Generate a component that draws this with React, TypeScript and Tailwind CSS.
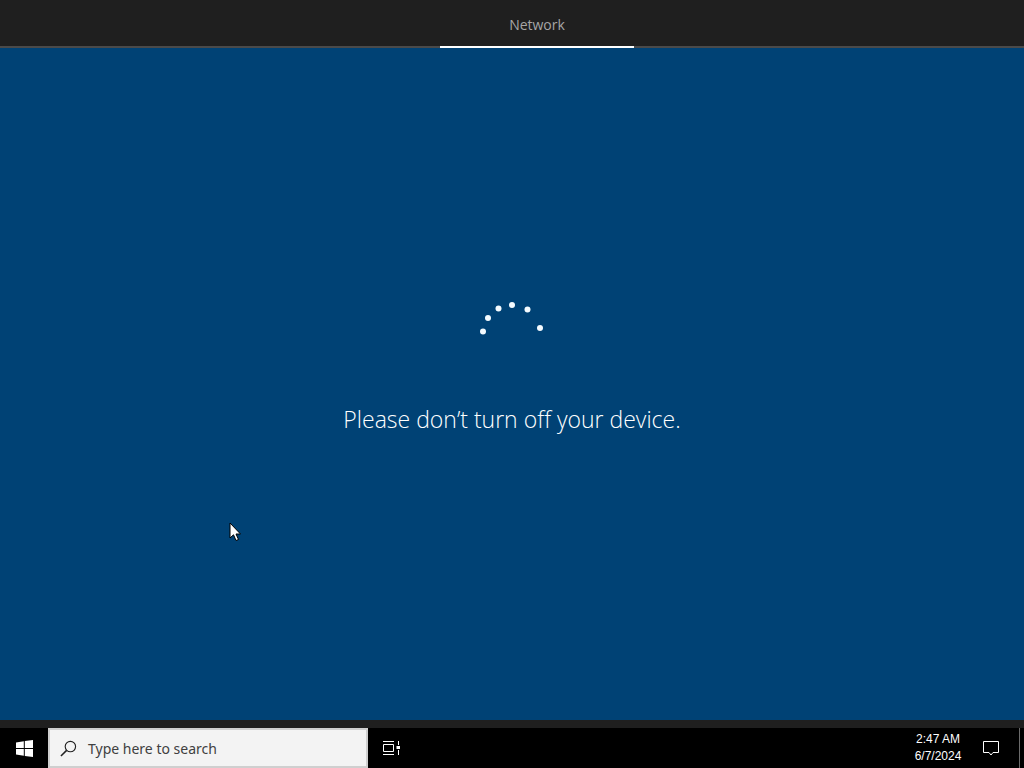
import React from 'react';

const dots = [
  { cx: 21, cy: 41.5 },
  { cx: 26, cy: 28 },
  { cx: 36.5, cy: 18.5 },
  { cx: 50, cy: 15 },
  { cx: 65.5, cy: 19.5 },
  { cx: 78, cy: 38 }
];

export default function App() {
  return <div className="relative flex flex-col h-[768px] w-[1024px] overflow-hidden bg-[#004275] font-['Open_Sans',sans-serif]">
      <header className="flex justify-center h-[48px] shrink-0 pl-[50px] bg-[#1f1f1f] border-b-2 border-[#4a4a4a]">
        <div className="flex items-center justify-center w-[194px] h-[48px] pt-[2px] border-b-2 border-white text-[14px] text-[#a6a6a6]">
          Network
        </div>
      </header>

      <main className="flex flex-col items-center flex-1 pt-[242px]">
        <svg width="100" height="50" viewBox="0 0 100 50" className="block">
          {dots.map((d, i) => <circle key={i} cx={d.cx} cy={d.cy} r="3" fill="#f4fbff" />)}
        </svg>
        <p className="mt-[62px] text-[23px] leading-[34px] font-light text-white">
          Please don’t turn off your device.
        </p>
      </main>

      <div className="h-[8px] shrink-0 bg-[#1f1f1f]" />

      <footer className="flex items-center h-[40px] shrink-0 bg-black text-white">
        <div className="flex items-center justify-center w-[48px] h-full">
          <svg width="17" height="17" viewBox="0 0 17 17" fill="#fff">
            <path d="M0 2.4 7.8 1.2V8H0ZM8.8 1.1 17 0V8H8.8ZM0 9H7.8V15.8L0 14.6ZM8.8 9H17V17L8.8 15.9Z" />
          </svg>
        </div>
        <div className="flex items-center w-[320px] h-full pl-[10px] bg-[#f3f3f3] border-2 border-[#cfcfcf]">
          <svg width="17" height="17" viewBox="0 0 18 18" fill="none" stroke="#222" strokeWidth="1.2">
            <circle cx="11" cy="7" r="5.5" />
            <path d="M7 11 1 17" strokeWidth="1.6" />
          </svg>
          <span className="ml-[11px] text-[14px] text-[#404040] font-['Noto_Sans',sans-serif]">Type here to search</span>
        </div>
        <div className="flex items-center justify-center w-[47px] h-full">
          <svg width="17" height="16" viewBox="0 0 17 16" fill="none" stroke="#fff">
            <path d="M0 1.5H11M0 14.5H11M.5 4.5H10.5V11.5H.5ZM15.5 1V5M15.5 10V15" />
            <rect x="13.5" y="6" width="3.5" height="3" fill="#fff" stroke="none" />
          </svg>
        </div>
        <div className="flex-1" />
        <div className="flex flex-col items-center w-[60px] mr-[15px] text-[12px] leading-[17px] font-['Liberation_Sans',sans-serif]">
          <span>2:47 AM</span>
          <span>6/7/2024</span>
        </div>
        <svg width="16" height="15" viewBox="0 0 16 15" fill="none" stroke="#fff" className="mr-[20px]">
          <path d="M.5.5H15.5V11.5H10L8 14 6 11.5H.5Z" />
        </svg>
        <div className="w-px h-full mr-[4px] bg-[#6b6b6b]" />
      </footer>

      {/* mouse pointer lies over the page */}
      <svg width="13" height="20" viewBox="0 0 13 20" className="absolute left-[229px] top-[522px]">
        <path d="M1 1V16L4.5 12.8 7 18.5 9.5 17.5 7 12H11.5Z" fill="#fff" stroke="#000" strokeWidth="1" />
      </svg>
    </div>;
}
